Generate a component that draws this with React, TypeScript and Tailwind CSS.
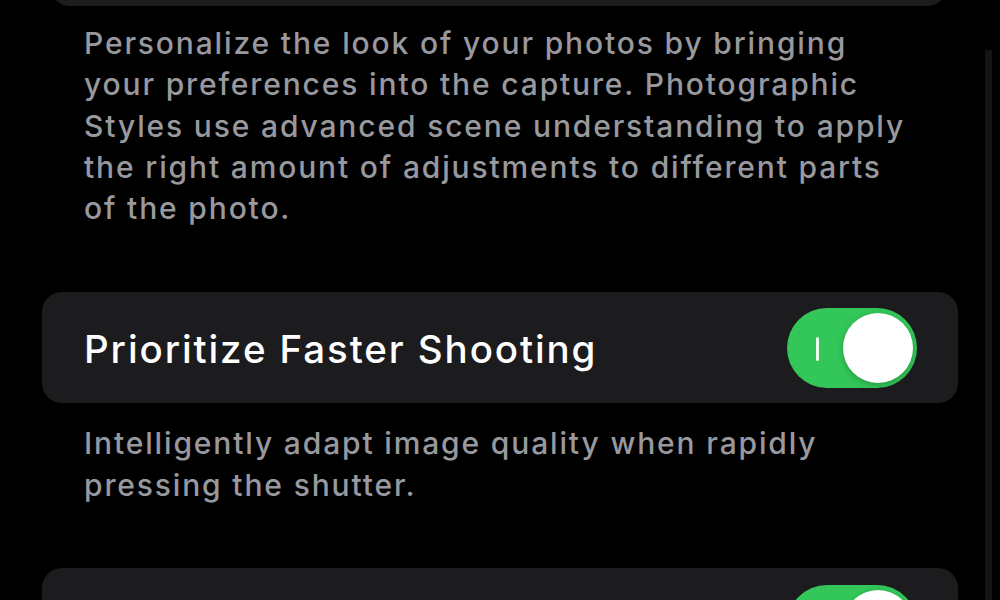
import React from "react";

function Toggle() {
  return (
    <div className="relative flex h-[80px] w-[130px] shrink-0 items-center justify-end rounded-full bg-[#33c759] pr-[4px]">
      <div className="absolute left-[29px] top-[29px] h-[24px] w-[2.5px] rounded-full bg-white/90" />
      <div className="h-[70px] w-[70px] rounded-full bg-white shadow-[0_2px_6px_rgba(0,0,0,0.25)]" />
    </div>
  );
}

export default function App() {
  return (
    <div
      className="relative h-[600px] w-[1000px] overflow-hidden bg-black"
      style={{ fontFamily: "Inter, 'Noto Sans', sans-serif" }}
    >
      <div className="absolute right-[8px] top-[50px] h-[560px] w-[7px] bg-[#141414]" />
      <div className="relative flex flex-col">
        <div className="-mt-[54px] ml-[50px] mr-[53px] h-[60px] rounded-[20px] bg-[#1c1c1e]" />
        <p className="mt-[17px] whitespace-nowrap pl-[84px] text-[30px] font-medium leading-[41.3px] tracking-[1.85px] text-[#98989f]">
          Personalize the look of your photos by bringing
          <br />
          your preferences into the capture. Photographic
          <br />
          Styles use advanced scene understanding to apply
          <br />
          the right amount of adjustments to different parts
          <br />
          of the photo.
        </p>
        <div className="mx-[42px] mt-[63px] flex h-[111px] items-center justify-between rounded-[20px] bg-[#1c1c1e] pl-[42px] pr-[41px]">
          <span className="pt-[3px] text-[38.5px] font-medium leading-none tracking-[1.9px] text-white">
            Prioritize Faster Shooting
          </span>
          <Toggle />
        </div>
        <p className="mt-[20px] whitespace-nowrap pl-[84px] text-[30px] font-medium leading-[41.3px] tracking-[1.85px] text-[#98989f]">
          Intelligently adapt image quality when rapidly
          <br />
          pressing the shutter.
        </p>
        <div className="mx-[42px] mt-[62px] flex h-[110px] items-start justify-end rounded-[20px] bg-[#1c1c1e] pr-[41px] pt-[17px]">
          <Toggle />
        </div>
      </div>
    </div>
  );
}
